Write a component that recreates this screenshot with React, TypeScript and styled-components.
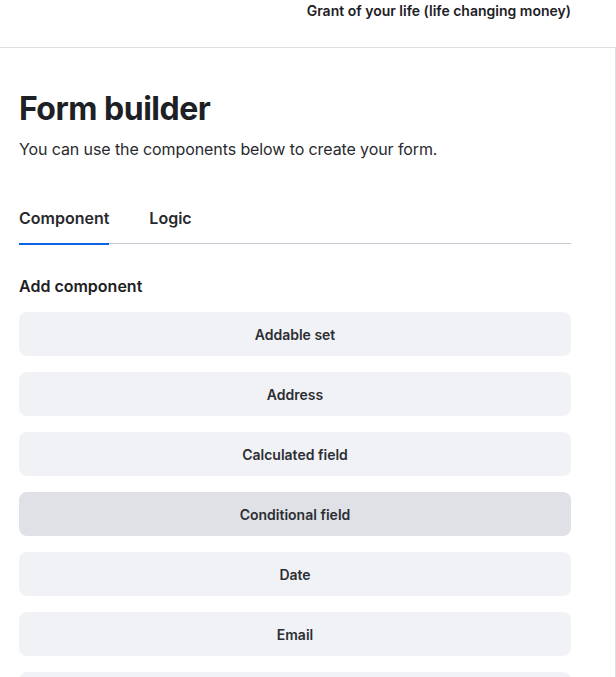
import { useState } from 'react';
import styled, { createGlobalStyle } from 'styled-components';

const GlobalStyle = createGlobalStyle`
    html, body {
        margin: 0;
        padding: 0;
        background: #FFF;
        font-family: Inter, "Noto Sans", sans-serif;
        color: #292A2E;
    }
`;

const Page = styled.div`
    width: 616px;
    height: 677px;
    overflow: hidden;
    display: flex;
    flex-direction: column;
`;

const Header = styled.header`
    height: 48px;
    flex-shrink: 0;
    display: flex;
    justify-content: flex-end;
    align-items: flex-start;
    padding: 1px 45px 0 0;
    box-sizing: border-box;
    border-bottom: 1px solid #DCDFE4;
`;

const ProjectName = styled.span`
    font-size: 14px;
    font-weight: 600;
    line-height: 20px;
    color: #1D2125;
`;

const Panel = styled.main`
    flex: 1;
    display: flex;
    flex-direction: column;
    padding: 41px 44px 0 19px;
    border-right: 1px solid #DCDFE4;
`;

const Title = styled.h1`
    margin: 0;
    font-size: 32px;
    font-weight: 700;
    line-height: 40px;
    letter-spacing: -0.5px;
    color: #1D2125;
`;

const Subtitle = styled.p`
    margin: 8px 0 0;
    font-size: 16px;
    line-height: 24px;
    letter-spacing: -0.1px;
    color: #292A2E;
`;

const TabList = styled.div`
    display: flex;
    gap: 40px;
    margin-top: 37px;
    border-bottom: 1px solid #C7CBD3;
`;

const Tab = styled.button<{ $active: boolean }>`
    position: relative;
    padding: 8px 0 13px;
    border: none;
    background: none;
    font-family: inherit;
    font-size: 16px;
    font-weight: 600;
    line-height: 24px;
    color: #292A2E;
    cursor: pointer;

    &::after {
        content: '';
        position: absolute;
        left: 0;
        right: 0;
        bottom: -2px;
        height: 2px;
        background: ${props => (props.$active ? '#0C66E4' : 'transparent')};
    }
`;

const SectionLabel = styled.h2`
    margin: 30px 0 14px;
    font-size: 16px;
    font-weight: 600;
    line-height: 24px;
    color: #1D2125;
`;

const ComponentList = styled.div`
    display: flex;
    flex-direction: column;
    gap: 16px;
`;

const AddButton = styled.button<{ $hover: boolean }>`
    height: 44px;
    flex-shrink: 0;
    border: none;
    border-radius: 8px;
    background: ${props => (props.$hover ? '#DFE1E6' : '#F1F2F6')};
    font-family: inherit;
    font-size: 14px;
    font-weight: 600;
    color: #2C2E33;
    cursor: pointer;
`;

const components = [
    'Addable set',
    'Address',
    'Calculated field',
    'Conditional field',
    'Date',
    'Email',
    'File upload',
];

function App() {
    const [tab, setTab] = useState('Component');

    return (
        <Page>
            <GlobalStyle />
            <Header>
                <ProjectName>Grant of your life (life changing money)</ProjectName>
            </Header>
            <Panel>
                <Title>Form builder</Title>
                <Subtitle>You can use the components below to create your form.</Subtitle>
                <TabList>
                    {['Component', 'Logic'].map(name => (
                        <Tab key={name} $active={tab === name} onClick={() => setTab(name)}>
                            {name}
                        </Tab>
                    ))}
                </TabList>
                <SectionLabel>Add component</SectionLabel>
                <ComponentList>
                    {components.map(name => (
                        <AddButton key={name} $hover={name === 'Conditional field'}>
                            {name}
                        </AddButton>
                    ))}
                </ComponentList>
            </Panel>
        </Page>
    );
}

export default App;
